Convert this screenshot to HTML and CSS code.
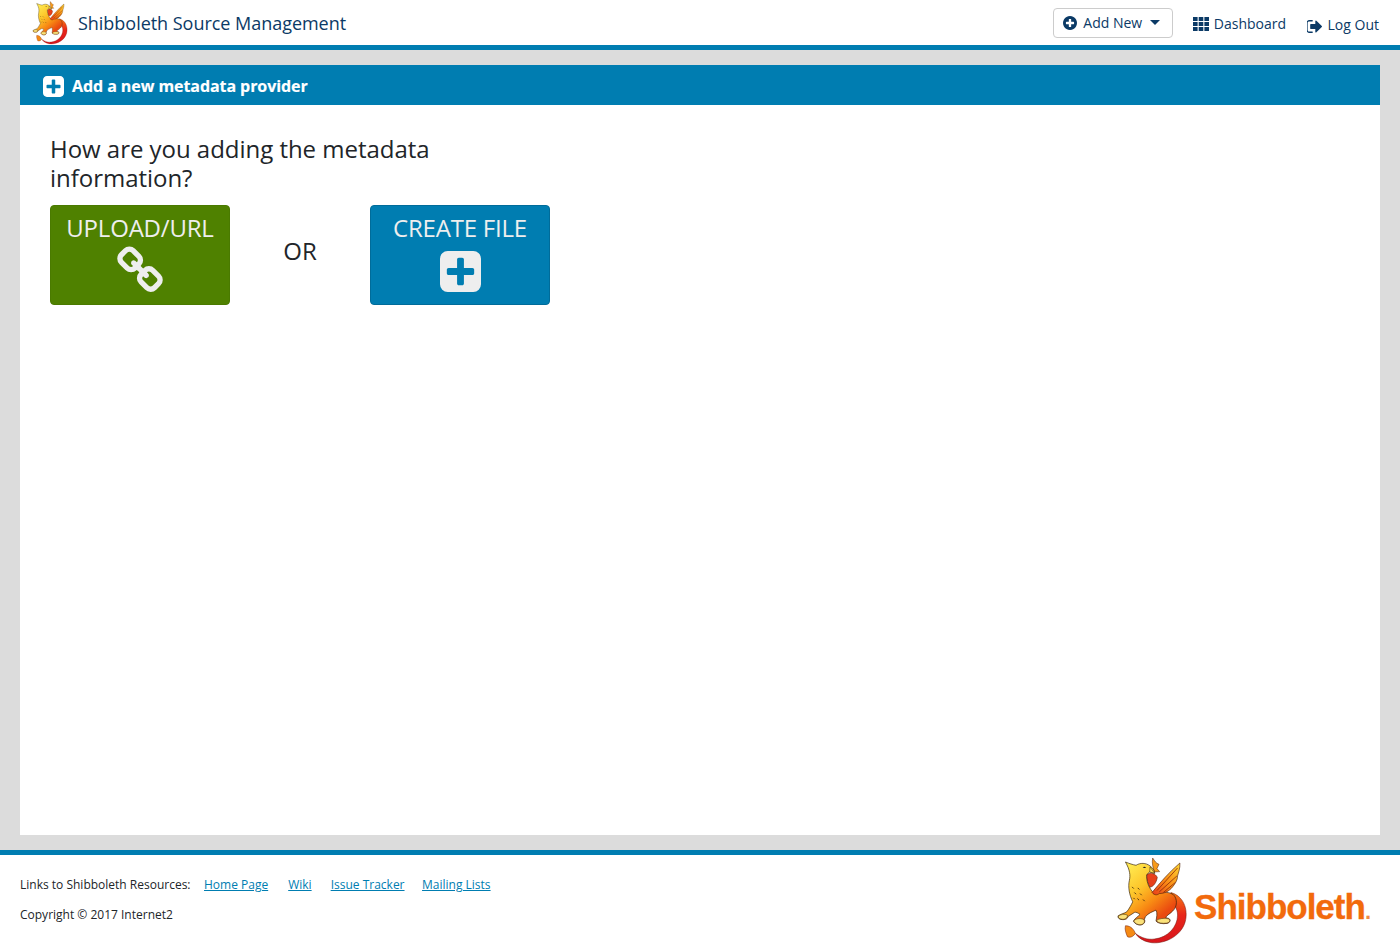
FILE: index.html
```html
<!DOCTYPE html>
<html lang="en">
<head>
<meta charset="utf-8">
<title>Shibboleth Source Management</title>
<link rel="stylesheet" href="styles.css">
</head>
<body>
<svg class="defs" width="0" height="0" aria-hidden="true">
  <defs>
    <linearGradient id="gb" x1="0.15" y1="0.1" x2="0.75" y2="0.85">
      <stop offset="0" stop-color="#ffe94f"/>
      <stop offset="0.4" stop-color="#fdc52a"/>
      <stop offset="0.7" stop-color="#f88c14"/>
      <stop offset="1" stop-color="#ea4a10"/>
    </linearGradient>
    <linearGradient id="gw" x1="1" y1="0" x2="0" y2="1">
      <stop offset="0" stop-color="#fdd835"/>
      <stop offset="0.55" stop-color="#f98a16"/>
      <stop offset="1" stop-color="#e8391a"/>
    </linearGradient>
    <linearGradient id="gt" x1="0.5" y1="0" x2="0.5" y2="1">
      <stop offset="0" stop-color="#f77a12"/>
      <stop offset="0.45" stop-color="#e8261a"/>
      <stop offset="1" stop-color="#d8151c"/>
    </linearGradient>
    <symbol id="griffin" viewBox="20 15 216 265">
      <path d="M185 122C222 132 238 172 228 210C215 256 160 280 120 272C100 268 86 257 78 245C95 258 115 265 135 262C175 258 205 226 205 190C205 172 196 158 184 150Z" fill="url(#gt)" stroke="#6b1208" stroke-width="1.500"/>
      <path d="M78 245C71 255 63 259 54 255C50 245 45 234 48 222C59 222 71 227 78 245Z" fill="#f58a14" stroke="#6b1208" stroke-width="1.500"/>
      <path d="M112 68C125 60 137 64 144 76C142 92 131 106 121 106C115 95 111 82 112 68Z" fill="#e8401a" stroke="#4a1a05" stroke-width="1.500"/>
      <path d="M130 18C137 28 140 34 149 37L143 50L151 59L135 60C131 46 127 34 130 18Z" fill="#f79a1a" stroke="#4a1a05" stroke-width="1.500"/>
      <path d="M48 30C60 35 70 38 80 40C92 32 110 32 122 42C130 48 136 55 136 64L121 60L112 68C110 85 118 110 135 125C150 118 175 118 192 128C205 140 205 165 190 178C180 188 170 192 170 198L178 200C186 203 183 214 172 215C160 217 145 215 140 208C142 195 145 185 140 175C130 180 118 183 108 195L105 203C109 210 104 219 92 220C84 220 75 215 72 208C76 200 85 195 92 188C85 183 80 180 75 182L55 195C55 202 45 205 35 203C28 202 24 197 26 192C35 186 45 185 52 180C60 170 65 160 70 150C60 130 55 105 60 85C63 70 62 55 48 30Z" fill="url(#gb)" stroke="#33200a" stroke-width="2"/>
      <path d="M27 193C35 187 45 186 54 190C55 200 45 204 35 202C29 201 26 198 27 193ZM73 208C78 201 90 198 103 203C108 210 104 218 92 219C84 219 76 215 73 208ZM141 207C148 200 165 198 177 201C185 204 182 213 172 214C160 216 147 214 141 207Z" fill="#fbe27a" stroke="#33200a" stroke-width="1.500"/>
      <path d="M122 45L136 64L121 60Z" fill="#fde25a" stroke="#33200a" stroke-width="1.500"/>
      <path d="M128 122C150 95 180 60 212 33C213 50 208 60 205 72C205 85 198 95 190 105C180 118 165 125 150 125C143 131 135 130 128 122Z" fill="url(#gw)" stroke="#4a1a05" stroke-width="1.800"/>
      <path d="M143 116L205 48M150 120L203 72M162 122L198 92" stroke="#8f2a08" stroke-width="2.500" fill="none"/>
      <path d="M68 105l5 5M85 108l5 5M75 122l5 5M92 125l5 5M84 140l5 5M101 143l5 5M72 138l4 4" stroke="#33200a" stroke-width="2.500" fill="none"/>
      <path d="M100 46q6-3 10 1q-6 3-10-1z" fill="#222"/>
    </symbol>
    <symbol id="plus-sq" viewBox="128 128 1536 1536">
      <path fill-rule="evenodd" d="M1408 960v-128q0-26-19-45t-45-19h-320v-320q0-26-19-45t-45-19h-128q-26 0-45 19t-19 45v320h-320q-26 0-45 19t-19 45v128q0 26 19 45t45 19h320v320q0 26 19 45t45 19h128q26 0 45-19t19-45v-320h320q26 0 45-19t19-45zm256-544v960q0 119-84.500 203.500t-203.500 84.500h-960q-119 0-203.500-84.500t-84.500-203.500v-960q0-119 84.500-203.500t203.500-84.500h960q119 0 203.500 84.500t84.500 203.500z"/>
    </symbol>
  </defs>
</svg>
<header class="topbar">
  <div class="brand">
    <svg class="brand-logo"><use href="#griffin"/></svg>
    <span class="brand-name">Shibboleth Source Management</span>
  </div>
  <nav class="topnav">
    <button class="add-new" type="button">
      <svg class="ic" viewBox="128 128 1536 1536"><path fill-rule="evenodd" fill="#0b3a66" d="M1344 960v-128q0-26-19-45t-45-19h-256v-256q0-26-19-45t-45-19h-128q-26 0-45 19t-19 45v256h-256q-26 0-45 19t-19 45v128q0 26 19 45t45 19h256v256q0 26 19 45t45 19h128q26 0 45-19t19-45v-256h256q26 0 45-19t19-45zm320-64q0 209-103 385.500t-279.500 279.500-385.500 103-385.500-103-279.500-279.500-103-385.500 103-385.500 279.500-279.500 385.500-103 385.500 103 279.500 279.500 103 385.500z"/></svg>
      <span>Add New</span>
      <span class="caret"></span>
    </button>
    <a class="nav-link dash" href="#">
      <svg class="ic grid" viewBox="0 0 16 14"><path d="M0 0h4.600v4H0zM5.700 0h4.600v4H5.700zM11.400 0H16v4h-4.600zM0 5h4.600v4H0zM5.700 5h4.600v4H5.700zM11.400 5H16v4h-4.600zM0 10h4.600v4H0zM5.700 10h4.600v4H5.700zM11.400 10H16v4h-4.600z" fill="#0b3a66"/></svg>
      <span>Dashboard</span>
    </a>
    <a class="nav-link logout" href="#">
      <svg class="ic out" viewBox="128 256 1504 1280"><path fill="#0b3a66" d="M704 1440q0 4 1 20t.5 26.500-3 23.500-10 19.500-20.500 6.500h-320q-119 0-203.500-84.500t-84.500-203.500v-704q0-119 84.500-203.500t203.500-84.500h320q13 0 22.500 9.500t9.500 22.500q0 4 1 20t.5 26.500-3 23.500-10 19.500-20.500 6.500h-320q-66 0-113 47t-47 113v704q0 66 47 113t113 47h312l11.500 1 11.500 3 8 5.500 7 9 2 13.500zm928-544q0 26-19 45l-544 544q-19 19-45 19t-45-19-19-45v-288h-448q-26 0-45-19t-19-45v-384q0-26 19-45t45-19h448v-288q0-26 19-45t45-19 45 19l544 544q19 19 19 45z"/></svg>
      <span>Log Out</span>
    </a>
  </nav>
</header>
<main class="stage">
  <section class="card">
    <h2 class="card-head">
      <svg class="head-ic"><use href="#plus-sq"/></svg>
      <span>Add a new metadata provider</span>
    </h2>
    <div class="card-body">
      <h3 class="question">How are you adding the metadata information?</h3>
      <div class="choices">
        <a class="choice green" href="#">
          <span>UPLOAD/URL</span>
          <svg class="choice-ic link" viewBox="0 0 1792 1792"><path fill="#eee" fill-rule="evenodd" d="M1520 1216q0-40-28-68l-208-208q-28-28-68-28-42 0-72 32 3 3 19 18.500t21.500 21.500 15 19 13 25.500 3.500 27.500q0 40-28 68t-68 28q-15 0-27.500-3.500t-25.500-13-19-15-21.500-21.500-18.500-19q-33 31-33 73 0 40 28 68l206 207q27 27 68 27 40 0 68-26l147-146q28-28 28-67zm-703-705q0-40-28-68l-206-207q-28-28-68-28-39 0-68 27l-147 146q-28 28-28 67 0 40 28 68l208 208q27 27 68 27 42 0 72-31-3-3-19-18.500t-21.500-21.500-15-19-13-25.500-3.500-27.500q0-40 28-68t68-28q15 0 27.500 3.500t25.500 13 19 15 21.500 21.500 18.500 19q33-31 33-73zm895 705q0 120-85 203l-147 146q-83 83-203 83-121 0-204-85l-206-207q-83-83-83-203 0-123 88-209l-88-88q-86 88-208 88-120 0-204-84l-208-208q-84-84-84-204t85-203l147-146q83-83 203-83 121 0 204 85l206 207q83 83 83 203 0 123-88 209l88 88q86-88 208-88 120 0 204 84l208 208q84 84 84 204z"/></svg>
        </a>
        <span class="or">OR</span>
        <a class="choice blue" href="#">
          <span>CREATE FILE</span>
          <svg class="choice-ic plus"><use href="#plus-sq"/></svg>
        </a>
      </div>
    </div>
  </section>
</main>
<footer class="foot">
  <div class="foot-text">
    <p class="foot-links">
      <span class="foot-label">Links to Shibboleth Resources:</span>
      <a class="gap-wide" href="#">Home Page</a>
      <a href="#">Wiki</a>
      <a class="gap-narrow" href="#">Issue Tracker</a>
      <a href="#">Mailing Lists</a>
    </p>
    <p class="copy">Copyright © 2017 Internet2</p>
  </div>
  <div class="foot-logo">
    <svg class="foot-griffin"><use href="#griffin"/></svg>
    <span class="wordmark">Shibboleth<i>.</i></span>
  </div>
</footer>
</body>
</html>
```
FILE: styles.css
```css
* { box-sizing: border-box; }
html, body { margin: 0; height: 100%; }
body {
  width: 1400px;
  height: 950px;
  overflow: hidden;
  display: flex;
  flex-direction: column;
  font-family: "Open Sans", sans-serif;
  color: #212529;
  background: #fff;
}
.defs { position: absolute; }
a { text-decoration: none; }

.topbar {
  flex: 0 0 50px;
  display: flex;
  justify-content: space-between;
  align-items: flex-start;
  border-bottom: 5px solid #007db1;
  background: #fff;
  padding-left: 32px;
  padding-right: 21px;
}
.brand { display: flex; align-items: center; height: 45px; }
.brand-logo { width: 36px; height: 44px; display: block; }
.brand-name { margin-left: 10px; font-size: 18px; color: #0b3a66; line-height: 24px; letter-spacing: -0.03px; }
.topnav { display: flex; align-items: flex-start; padding-top: 8px; }
.add-new {
  display: flex;
  align-items: center;
  width: 120px;
  height: 30px;
  padding: 0 0 1px 9px;
  border: 1px solid #ccc;
  border-radius: 4px;
  background: #fff;
  color: #0b3a66;
  font: 14px/20px "Open Sans", sans-serif;
}
.ic { display: block; flex: none; }
.add-new .ic { width: 14px; height: 14px; margin-right: 6px; }
.caret {
  width: 0; height: 0;
  margin-left: 8px;
  border-left: 5px solid transparent;
  border-right: 5px solid transparent;
  border-top: 5px solid #0b3a66;
}
.nav-link { display: flex; align-items: center; color: #0b3a66; font-size: 14px; line-height: 20px; }
.dash { margin-left: 20px; margin-top: 6px; }
.grid { width: 16px; height: 14px; margin-right: 4.500px; }
.logout { margin-left: 20.500px; margin-top: 7px; }
.out { width: 15px; height: 13px; margin-right: 6px; margin-top: 2px; }

.stage {
  flex: 1;
  background: #dcdcdc;
  padding: 15px 20px;
  display: flex;
}
.card { flex: 1; background: #fff; }
.card-head {
  display: flex;
  align-items: center;
  height: 40px;
  margin: 0;
  padding: 2px 0 0 23px;
  background: #007db1;
  color: #fff;
  font-size: 16px;
  font-weight: 700;
  letter-spacing: -0.07px;
  -webkit-text-stroke: 0.15px #fff;
}
.head-ic { width: 21px; height: 21px; fill: #fff; margin: 1px 8px 0 0; }
.card-body { padding: 29px 30px 30px; }
.question {
  width: 440px;
  margin: 0 0 13px;
  font-size: 24px;
  font-weight: 400;
  line-height: 29px;
  letter-spacing: -0.03px;
  color: #212529;
}
.choices { display: flex; align-items: flex-start; }
.choice {
  width: 180px;
  height: 100px;
  display: flex;
  flex-direction: column;
  align-items: center;
  padding-top: 5px;
  border-radius: 4px;
  color: #eee;
  font-size: 24px;
  line-height: 33px;
  letter-spacing: -0.2px;
}
.green { background: #4f8100; border: 1px solid #4a7a00; }
.blue { background: #007db1; border: 1px solid #006c9a; }
.choice-ic { display: block; }
.choice-ic.link { width: 50px; height: 50px; margin-top: 2px; }
.choice-ic.plus { width: 41px; height: 41px; fill: #eee; margin: 7px 0 0 1px; }
.or { width: 140px; text-align: center; font-size: 24px; line-height: 33px; padding-top: 29px; }

.foot {
  flex: 0 0 100px;
  display: flex;
  justify-content: space-between;
  border-top: 5px solid #007db1;
  padding-left: 20px;
  padding-right: 29px;
  background: #fff;
}
.foot-text { font-size: 12px; line-height: 18px; }
.foot-links { margin: 21px 0 12px; display: flex; }
.foot-label { margin-right: 13.500px; }
.foot-links a { color: #007db1; text-decoration: underline; margin-right: 19px; }
.foot-links a.gap-wide { margin-right: 20px; }
.foot-links a.gap-narrow { margin-right: 17.500px; }
.copy { margin: 0; }
.foot-logo { display: flex; align-items: flex-start; }
.foot-griffin { width: 72px; height: 88px; margin-top: 2px; display: block; }
.wordmark {
  margin-left: 6px;
  margin-top: 27px;
  font-family: "Liberation Sans", sans-serif;
  font-weight: 700;
  font-size: 35px;
  line-height: 50px;
  letter-spacing: -1px;
  color: #f26a0c;
  -webkit-text-stroke: 0.3px #f26a0c;
}
.wordmark i { font-style: normal; font-size: 22px; letter-spacing: 0; color: #f08a44; -webkit-text-stroke: 0; }
```
